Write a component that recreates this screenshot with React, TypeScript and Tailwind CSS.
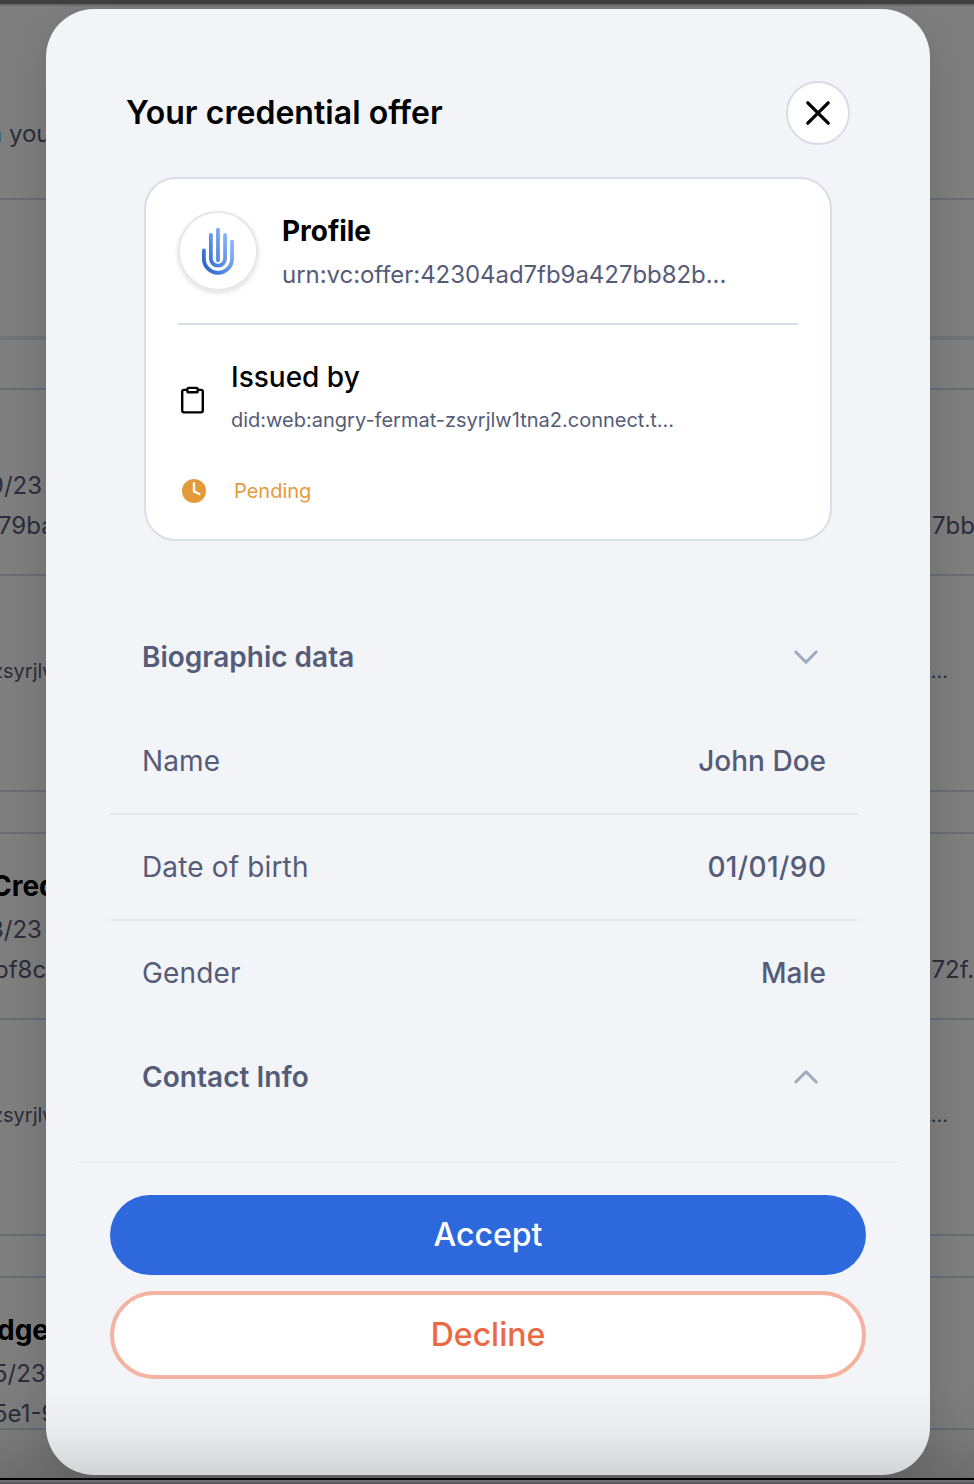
import React from "react";

type Entry = {
  title?: string;
  date: string;
  id: string;
  idEnd: string;
};

const entries: Entry[] = [
  { date: "9/23", id: "79ba", idEnd: "7bb" },
  { title: "Cred", date: "3/23", id: "bf8c", idEnd: "d72f..." },
];

function HandLogo() {
  return (
    <svg width="36" height="50" viewBox="0 0 36 50" fill="none" stroke="url(#hand)" strokeWidth="3.8" strokeLinecap="round">
      <defs>
        <linearGradient id="hand" gradientUnits="userSpaceOnUse" x1="3" y1="38" x2="34" y2="22">
          <stop stopColor="#2d66cf" />
          <stop offset="1" stopColor="#8ab5f5" />
        </linearGradient>
      </defs>
      <path d="M3.9 24.3V32.7a14.1 14.1 0 0 0 28.2 0V15.6" />
      <path d="M10.9 8.8V32.6a7.1 7.1 0 0 0 14.2 0V8.8" />
      <path d="M18 3.6L18.01 34.2" />
    </svg>
  );
}

function Chevron({ up = false }: { up?: boolean }) {
  return (
    <svg width="26" height="16" viewBox="0 0 26 16" fill="none" stroke="#9faabf" strokeWidth="3" strokeLinecap="round" strokeLinejoin="round">
      <path d={up ? "M2.8 13L13 2.8L23.2 13" : "M2.8 3L13 13.2L23.2 3"} />
    </svg>
  );
}

function DataRow({ label, value, last = false }: { label: string; value: string; last?: boolean }) {
  return (
    <div className={`flex w-[748px] items-center justify-between px-8 ${last ? "h-[104px]" : "h-[106px] border-b-2 border-[#e5e7eb]"}`}>
      <span className="tracking-[0.15px]">{label}</span>
      <span className={value.includes("/") ? "-mr-[0.4px] font-medium tracking-[0.4px]" : "font-medium"}>{value}</span>
    </div>
  );
}

function PageBehind() {
  return (
    <div className="flex h-[1484px] flex-col text-[24px] leading-10 whitespace-nowrap text-[#2b2e3c]">
      <div className="h-1 shrink-0 bg-[#404040]" />
      <div className="h-0.5 shrink-0 bg-[#6a6a6a]" />
      <div className="h-[194px] shrink-0 border-b-2 border-[#6b6d74] pt-[108px]">
        <div className="-ml-3">n you</div>
      </div>
      <div className="h-[140px] shrink-0 border-b-4 border-[#737477]" />
      <div className="h-[50px] shrink-0 border-b-2 border-[#6b6d74]" />
      {entries.map((e) => (
        <React.Fragment key={e.id}>
          <div className="flex h-[186px] shrink-0 flex-col justify-end border-b-2 border-[#6b6d74] pb-7">
            {e.title && <div className="-ml-[9px] pb-1 text-[28px] font-bold text-black">{e.title}</div>}
            <div className="-ml-[11px]">{e.date}</div>
            <div className="flex justify-between">
              <div className={e.title ? "-ml-[6px]" : "-ml-[2px]"}>{e.id}</div>
              <div className={e.title ? "-mr-[14px]" : "-mr-[1px]"}>{e.idEnd}</div>
            </div>
          </div>
          <div className="flex h-[216px] shrink-0 justify-between border-b-2 border-[#6b6d74] pt-[75px] pr-[26px] text-[20px]">
            <div className="-ml-[8px]">zsyrjlw</div>
            <div>t...</div>
          </div>
          <div className="h-[42px] shrink-0 border-b-2 border-[#6b6d74]" />
        </React.Fragment>
      ))}
      <div className="h-[152px] shrink-0 border-b-2 border-[#6b6d74] pt-8">
        <div className="-ml-[3px] pb-1 text-[28px] font-bold text-black">dge</div>
        <div className="-ml-[7px]">5/23</div>
        <div className="-ml-[7px]">5e1-9</div>
      </div>
    </div>
  );
}

export default function App() {
  return (
    <div className="relative h-[1484px] w-[974px] overflow-hidden bg-[#7f7f7f] font-['Inter',sans-serif]">
      <PageBehind />
      <div className="absolute inset-0 flex flex-col items-center pt-[9px]">
        <section className="ml-0.5 flex h-[1466px] w-[884px] flex-col rounded-[48px] bg-[#f2f4f8] text-[28px] text-[#555c78] shadow-[0_16px_48px_rgba(0,0,0,0.16)]">
          <header className="flex items-center justify-between pt-[72px] pr-20 pl-20">
            <h1 className="text-[32px] font-semibold tracking-[0.04px] text-black">Your credential offer</h1>
            <button className="flex size-16 items-center justify-center rounded-full border-2 border-[#d8dde6] bg-white">
              <svg width="26" height="26" viewBox="0 0 26 26" fill="none" stroke="#000" strokeWidth="3.3" strokeLinecap="round">
                <path d="M2.8 2.8L23.2 23.2M23.2 2.8L2.8 23.2" />
              </svg>
            </button>
          </header>

          <div className="mt-8 ml-[98px] flex h-[364px] w-[688px] flex-col rounded-[32px] border-2 border-[#d8dde6] bg-white px-8 pt-8">
            <div className="flex h-[114px] shrink-0 border-b-2 border-[#d8dde6]">
              <div className="flex size-20 items-center justify-center rounded-full border-2 border-[#e5e7eb] shadow-[0_2px_5px_rgba(0,0,0,0.14)]">
                <HandLogo />
              </div>
              <div className="pl-6">
                <div className="leading-10 font-bold tracking-[-0.05px] text-black">Profile</div>
                <div className="pt-1 text-[24px] leading-10 tracking-[-0.05px]">urn:vc:offer:42304ad7fb9a427bb82b...</div>
              </div>
            </div>
            <div className="flex pt-8">
              <svg className="mt-[29px] ml-[3px]" width="24" height="28" viewBox="0 0 24 28" fill="none" stroke="#000" strokeWidth="2.4" strokeLinejoin="round">
                <path d="M6.3 3.9H3Q1.2 3.9 1.2 5.7V24.6Q1.2 26.4 3 26.4H20Q21.8 26.4 21.8 24.6V5.7Q21.8 3.9 20 3.9H16.7" />
                <rect x="6.4" y="1.9" width="10.3" height="4.4" rx="1.4" />
              </svg>
              <div className="pl-[26px]">
                <div className="leading-10 font-medium text-black">Issued by</div>
                <div className="pt-[3px] text-[20px] leading-10">did:web:angry-fermat-zsyrjlw1tna2.connect.t...</div>
              </div>
            </div>
            <div className="flex items-center pt-[31px] pl-1 text-[20px] leading-10 text-[#e59a3a]">
              <svg width="24" height="24" viewBox="0 0 24 24" fill="none">
                <circle cx="12" cy="12" r="12" fill="#e59a3a" />
                <path d="M12 4.2V12.4L17.4 15" stroke="#fff" strokeWidth="2.4" strokeLinecap="round" strokeLinejoin="round" />
              </svg>
              <span className="pl-7">Pending</span>
            </div>
          </div>

          <div className="mt-[64px] ml-16 flex h-[104px] w-[748px] items-center justify-between pr-[39px] pl-8">
            <h2 className="font-semibold">Biographic data</h2>
            <Chevron />
          </div>
          <div className="ml-16">
            <DataRow label="Name" value="John Doe" />
            <DataRow label="Date of birth" value="01/01/90" />
            <DataRow label="Gender" value="Male" last />
          </div>
          <div className="ml-16 flex h-[104px] w-[748px] items-center justify-between pr-[39px] pl-8">
            <h2 className="font-semibold tracking-[0.05px]">Contact Info</h2>
            <Chevron up />
          </div>

          <footer className="mx-8 mt-8 flex flex-col gap-4 border-t-2 border-[#eaecf0] px-8 pt-8 text-[32px] font-medium">
            <button className="h-20 rounded-full bg-[#2d69dd] text-white">Accept</button>
            <button className="h-[88px] rounded-full border-4 border-[#f4b2a0] bg-white text-[#ec6843]">Decline</button>
          </footer>
        </section>
      </div>
      <div className="absolute inset-x-0 bottom-0 flex flex-col">
        <div className="h-[94px] bg-linear-to-b from-transparent via-black/4 to-black/14" />
        <div className="h-0.5 bg-black" />
        <div className="h-0.5 bg-[#6f6f6f]" />
        <div className="h-0.5 bg-[#5c5c5f]" />
      </div>
    </div>
  );
}
